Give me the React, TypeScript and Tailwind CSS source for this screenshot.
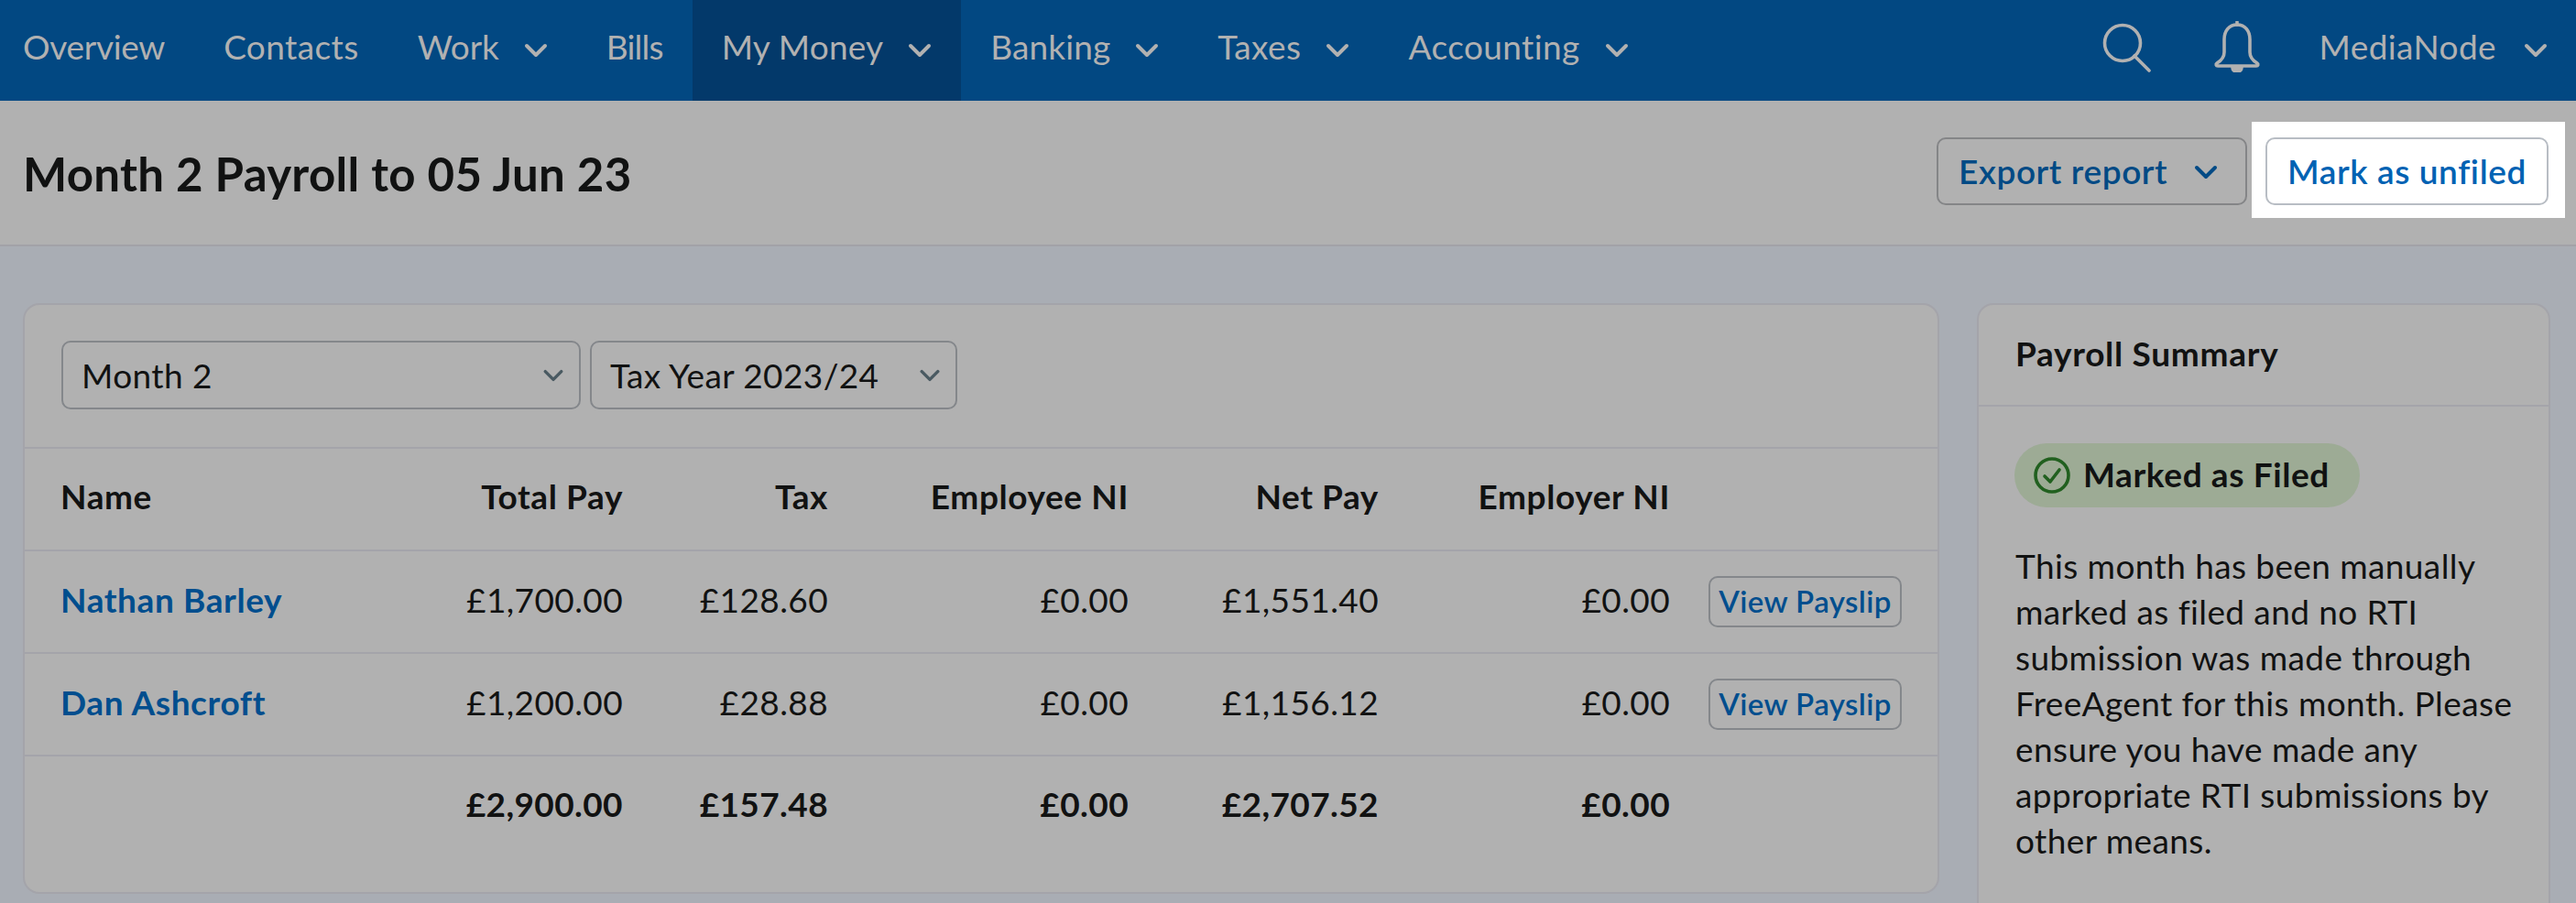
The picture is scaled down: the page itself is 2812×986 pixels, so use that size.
const font = { fontFamily: '"Lato", "Liberation Sans", sans-serif' };

function Chevron({ className }: { className: string }) {
  return (
    <svg viewBox="0 0 26 16" className={className} fill="none" stroke="currentColor" strokeWidth="4" strokeLinecap="round" strokeLinejoin="round">
      <polyline points="3,3 13,13 23,3" />
    </svg>
  );
}

function NavItem({ label, chevron, active, tight }: { label: string; chevron?: boolean; active?: boolean; tight?: string }) {
  return (
    <div className={`flex h-[110px] items-center px-8 pb-[8px] ${active ? 'bg-[#03396a]' : ''}`}>
      <span className={tight}>{label}</span>
      {chevron && <Chevron className="ml-[27px] mt-[8px] h-[16px] w-[26px]" />}
    </div>
  );
}

const rows = [
  { name: 'Nathan Barley', cells: ['£1,700.00', '£128.60', '£0.00', '£1,551.40', '£0.00'] },
  { name: 'Dan Ashcroft', cells: ['£1,200.00', '£28.88', '£0.00', '£1,156.12', '£0.00'] },
];

const grid = 'grid h-[112px] grid-cols-[332px_282px_224px_328px_273px_318px_253px] items-center border-t-2 border-[#a4a4aa] pl-[39px] pr-[41px] pb-[6px]';

export default function App() {
  return (
    <div style={font} className="h-[986px] w-[2812px] overflow-hidden bg-[#a9adb4] text-[37px] tracking-[0.4px] text-[#111212]">
      <header className="flex h-[110px] items-start justify-between bg-[#024882] text-[#b1b1b1]">
        <nav className="-ml-[7px] flex">
          <NavItem label="Overview" tight="tracking-[-0.3px]" />
          <NavItem label="Contacts" />
          <NavItem label="Work" chevron tight="tracking-[-0.1px]" />
          <NavItem label="Bills" tight="tracking-[-0.8px]" />
          <NavItem label="My Money" chevron active tight="tracking-[0.2px]" />
          <NavItem label="Banking" chevron tight="tracking-[0.1px]" />
          <NavItem label="Taxes" chevron />
          <NavItem label="Accounting" chevron />
        </nav>
        <div className="flex h-[110px] items-center pb-[8px] pr-[31px]">
          <svg viewBox="0 0 54 54" className="mr-[67px] mt-[2px] h-[54px] w-[54px]" fill="none" stroke="currentColor" strokeWidth="3.6" strokeLinecap="round">
            <circle cx="22" cy="22" r="19.5" />
            <line x1="35" y1="36" x2="51" y2="52" />
          </svg>
          <svg viewBox="0 0 52 56" className="mr-[64px] h-[56px] w-[52px]" fill="none" stroke="currentColor" strokeWidth="3.6" strokeLinecap="round" strokeLinejoin="round">
            <path d="M26 4c-9 0-14 7-14 16v14c0 5-3 9-8 12-1.500 1-1 3 1 3h42c2 0 2.500-2 1-3-5-3-8-7-8-12V20c0-9-5-16-14-16z" />
            <path d="M26 1v3" />
            <path d="M21 50c0 4 2.500 5 5 5s5-1 5-5" fill="currentColor" />
          </svg>
          <span>MediaNode</span>
          <Chevron className="ml-[30px] mt-[8px] h-[16px] w-[26px]" />
        </div>
      </header>

      <section className="flex h-[159px] items-start justify-between border-b-2 border-[#a2a2a7] bg-[#b1b1b1] pl-[25px] pr-[12px]">
        <h1 className="mt-[50px] text-[51px] font-bold leading-[60px] tracking-[0.3px]">Month 2 Payroll to 05 Jun 23</h1>
        <div className="mt-[23px] flex items-start">
          <button className="mt-[17px] mr-[5px] flex h-[74px] w-[339px] items-center justify-between rounded-[10px] border-2 border-[#848587] pl-[22px] pr-[30px] font-semibold tracking-[0.6px] text-[#014a85]">
            <span>Export report</span>
            <Chevron className="mt-[2px] h-[16px] w-[26px]" />
          </button>
          <div className="bg-white pb-[14px] pl-[15px] pr-[18px] pt-[17px]">
            <button className="flex h-[74px] w-[309px] items-center justify-center rounded-[10px] border-2 border-[#b8bdc4] bg-white font-semibold tracking-[0.6px] text-[#0062b3]">
              Mark as unfiled
            </button>
          </div>
        </div>
      </section>

      <main className="flex items-start gap-[41px] px-[25px] pt-[62px]">
        <div className="h-[645px] w-[2092px] shrink-0 rounded-[18px] border-2 border-[#a4a4aa] bg-[#b1b1b1]">
          <div className="flex h-[155px] items-start gap-[10px] px-[40px] pt-[39px]">
            <div className="flex h-[75px] w-[567px] items-center justify-between rounded-[10px] border-2 border-[#84878b] pl-[20px] pr-[16px]">
              <span>Month 2</span>
              <Chevron className="h-[14px] w-[24px] text-[#4a5a62]" />
            </div>
            <div className="flex h-[75px] w-[401px] items-center justify-between rounded-[10px] border-2 border-[#84878b] pl-[20px] pr-[16px]">
              <span>Tax Year 2023/24</span>
              <Chevron className="h-[14px] w-[24px] text-[#4a5a62]" />
            </div>
          </div>

          <div className={`${grid} font-bold tracking-[0.6px]`}>
            <div>Name</div>
            <div className="text-right">Total Pay</div>
            <div className="text-right">Tax</div>
            <div className="text-right">Employee NI</div>
            <div className="text-right">Net Pay</div>
            <div className="text-right">Employer NI</div>
            <div />
          </div>
          {rows.map((r) => (
            <div key={r.name} className={grid}>
              <a className="mt-[2px] whitespace-nowrap font-bold tracking-[0.6px] text-[#014e8e]">{r.name}</a>
              {r.cells.map((c, i) => (
                <div key={i} className="mt-[2px] text-right">{c}</div>
              ))}
              <div className="flex justify-end">
                <button className="mt-[6px] flex h-[56px] w-[211px] items-center justify-center rounded-[10px] border-2 border-[#84878b] text-[33px] font-semibold text-[#014e8e]">
                  View Payslip
                </button>
              </div>
            </div>
          ))}
          <div className={`${grid} font-bold`}>
            <div />
            <div className="text-right">£2,900.00</div>
            <div className="text-right">£157.48</div>
            <div className="text-right">£0.00</div>
            <div className="text-right">£2,707.52</div>
            <div className="text-right">£0.00</div>
            <div />
          </div>
        </div>

        <aside className="h-[800px] w-[626px] shrink-0 rounded-[18px] border-2 border-[#a4a4aa] bg-[#b1b1b1]">
          <div className="flex h-[111px] items-center border-b-2 border-[#a4a4aa] pb-[4px] pl-[40px] font-bold tracking-[0.7px]">
            Payroll Summary
          </div>
          <div className="pl-[40px] pr-[28px] pt-[40px]">
            <div className="-ml-[1px] inline-flex h-[70px] w-[377px] items-center rounded-full bg-[#9dab95] pb-[2px] pl-[21px] font-bold tracking-[0.6px]">
              <svg viewBox="0 0 40 40" className="mr-[14px] mt-[2px] h-[40px] w-[40px]" fill="none" stroke="#21601f" strokeWidth="3.600" strokeLinecap="round" strokeLinejoin="round">
                <circle cx="20" cy="20" r="18" />
                <polyline points="12,21 18,27 28,14" />
              </svg>
              Marked as Filed
            </div>
            <p className="mt-[39px] leading-[50px]">
              This month has been manually marked as filed and no RTI submission was made through FreeAgent for this month. Please ensure you have made any appropriate RTI submissions by other means.
            </p>
          </div>
        </aside>
      </main>
    </div>
  );
}
